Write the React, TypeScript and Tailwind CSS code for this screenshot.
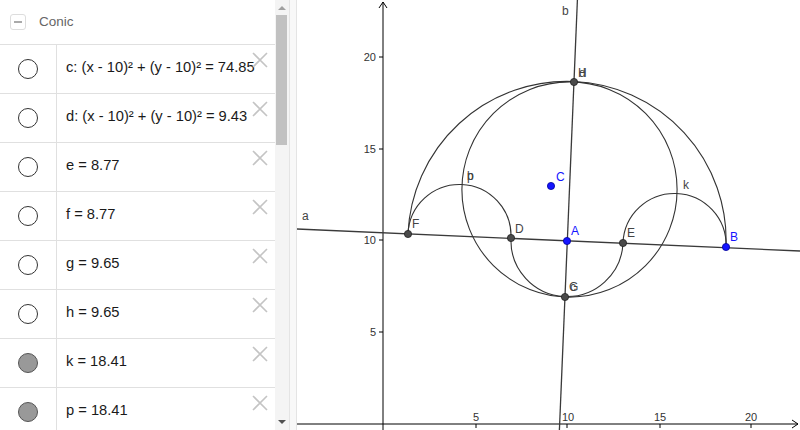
import React from 'react';

const rows = [
  { text: 'c: (x - 10)² + (y - 10)² = 74.85', filled: false },
  { text: 'd: (x - 10)² + (y - 10)² = 9.43', filled: false },
  { text: 'e = 8.77', filled: false },
  { text: 'f = 8.77', filled: false },
  { text: 'g = 9.65', filled: false },
  { text: 'h = 9.65', filled: false },
  { text: 'k = 18.41', filled: true },
  { text: 'p = 18.41', filled: true },
];

function CloseIcon() {
  return (
    <svg width="18" height="18" viewBox="0 0 18 18" className="absolute right-[6px] top-[6px]">
      <path d="M2 2 L16 16 M16 2 L2 16" stroke="#c4c4c4" strokeWidth="1.6" fill="none" />
    </svg>
  );
}

function AlgebraRow({ text, filled }: { text: string; filled: boolean }) {
  return (
    <div className="relative flex h-[49px] shrink-0 border-b border-[#e0e0e0]">
      <div className="flex w-[57px] items-center justify-center border-r border-[#e0e0e0]">
        <div
          className={
            filled
              ? 'h-[20px] w-[20px] rounded-full border-[1.5px] border-[#555] bg-[#999]'
              : 'h-[20px] w-[20px] rounded-full border-[1.5px] border-[#333] bg-white'
          }
        />
      </div>
      <div className="flex items-center pb-[3px] pl-[9px] text-[14.7px] text-[#1a1a1a] whitespace-nowrap">{text}</div>
      <CloseIcon />
    </div>
  );
}

type Pt = { x: number; y: number; label: string; lx: number; ly: number; blue?: boolean; extra?: string };

const points: Pt[] = [
  { x: 408, y: 234, label: 'F', lx: 412, ly: 228 },
  { x: 511, y: 238, label: 'D', lx: 515, ly: 233 },
  { x: 567, y: 241, label: 'A', lx: 571, ly: 235, blue: true },
  { x: 623, y: 243, label: 'E', lx: 627, ly: 237 },
  { x: 726, y: 247, label: 'B', lx: 730, ly: 241, blue: true },
  { x: 565, y: 297, label: 'G', lx: 569, ly: 291, extra: 'c' },
  { x: 574, y: 82, label: 'H', lx: 578, ly: 77, extra: 'd' },
  { x: 551, y: 186, label: 'C', lx: 556, ly: 181, blue: true },
];

function Graphics() {
  const ink = '#333';
  return (
    <svg width="503" height="430" viewBox="297 0 503 430" className="block">
      {/* axes */}
      <g stroke="#000" strokeWidth="1" fill="none">
        <line x1="383" y1="2" x2="383" y2="430" />
        <polyline points="379,8 383,2 387,8" />
        <line x1="297" y1="424" x2="798" y2="424" />
        <polyline points="792,420 798,424 792,428" />
        {[57, 149, 240, 332].map((y) => (
          <line key={y} x1="379" y1={y} x2="383" y2={y} />
        ))}
        {[476, 567, 660, 751].map((x) => (
          <line key={x} x1={x} y1="424" x2={x} y2="428" />
        ))}
      </g>
      <g fontFamily="'Liberation Sans', Arial, sans-serif" fontSize="11" fill="#333">
        <text x="376" y="61" textAnchor="end">20</text>
        <text x="376" y="153" textAnchor="end">15</text>
        <text x="376" y="244" textAnchor="end">10</text>
        <text x="376" y="336" textAnchor="end">5</text>
        <text x="476" y="421" textAnchor="middle">5</text>
        <text x="568" y="421" textAnchor="middle">10</text>
        <text x="660" y="421" textAnchor="middle">15</text>
        <text x="751" y="421" textAnchor="middle">20</text>
      </g>

      {/* lines a, b */}
      <g stroke="#3a3a3a" strokeWidth="1.3" fill="none">
        <line x1="297" y1="229" x2="800" y2="251" />
        <line x1="577.4" y1="0" x2="559.4" y2="430" />
      </g>

      {/* conics and arcs */}
      <g stroke={ink} strokeWidth="1.1" fill="none">
        <path d="M 408 234 A 159.1 159.1 0 0 1 726 247" />
        <circle cx="569.5" cy="189.5" r="107.6" />
        <path d="M 408 234 A 51.5 51.5 0 0 1 511 238" />
        <path d="M 623 243 A 51.5 51.5 0 0 1 726 247" />
        <path d="M 511 238 A 56 56 0 0 0 623 243" />
      </g>

      {/* points */}
      {points.map((p) => (
        <circle
          key={p.label}
          cx={p.x}
          cy={p.y}
          r="3.6"
          fill={p.blue ? '#1414ff' : '#4a4a4a'}
          stroke={p.blue ? '#00009a' : '#222'}
          strokeWidth="0.8"
        />
      ))}

      {/* labels (GeoGebra draws some labels on top of each other) */}
      <g fontFamily="'Liberation Sans', Arial, sans-serif" fontSize="12">
        {points.map((p) => (
          <g key={p.label + 't'}>
            <text x={p.lx} y={p.ly} fill={p.blue ? '#1414ff' : '#444'}>
              {p.label}
            </text>
            {p.extra && (
              <text x={p.lx + 1} y={p.ly} fill="#444">
                {p.extra}
              </text>
            )}
          </g>
        ))}
        <text x="302" y="220" fill="#444">a</text>
        <text x="562" y="15" fill="#444">b</text>
        <text x="467" y="180" fill="#444">p</text>
        <text x="467" y="180" fill="#444">b</text>
        <text x="683" y="189" fill="#444">k</text>
      </g>
    </svg>
  );
}

export default function App() {
  return (
    <div
      className="flex h-[430px] w-[800px] overflow-hidden bg-white"
      style={{ fontFamily: "'Liberation Sans', Arial, sans-serif" }}
    >
      {/* algebra view */}
      <div className="flex w-[289px] shrink-0">
        <div className="flex w-[275px] flex-col overflow-hidden">
          <div className="flex h-[45px] shrink-0 items-center gap-[13px] border-b border-[#e0e0e0] pl-[10px]">
            <div className="flex h-[16px] w-[16px] items-center justify-center rounded-[3px] border border-[#ddd]">
              <div className="h-[1.5px] w-[8px] bg-[#aaa]" />
            </div>
            <span className="text-[13.5px] text-[#666]">Conic</span>
          </div>
          {rows.map((r) => (
            <AlgebraRow key={r.text} text={r.text} filled={r.filled} />
          ))}
        </div>

        {/* scrollbar */}
        <div className="relative w-[14px] bg-[#f4f4f4]">
          <div className="absolute left-[3px] top-[6px] h-0 w-0 border-x-[4px] border-b-[4px] border-x-transparent border-b-[#a0a0a0]" />
          <div className="absolute left-[1px] top-[15px] h-[130px] w-[11px] bg-[#c1c1c1]" />
          <div className="absolute bottom-[6px] left-[3px] h-0 w-0 border-x-[4px] border-t-[4px] border-x-transparent border-t-[#505050]" />
        </div>
      </div>

      {/* divider */}
      <div className="w-[8px] shrink-0 border-l border-r border-[#e4e4e4] bg-[#f8f8f8]" />

      {/* graphics view */}
      <div className="flex-1">
        <Graphics />
      </div>
    </div>
  );
}
